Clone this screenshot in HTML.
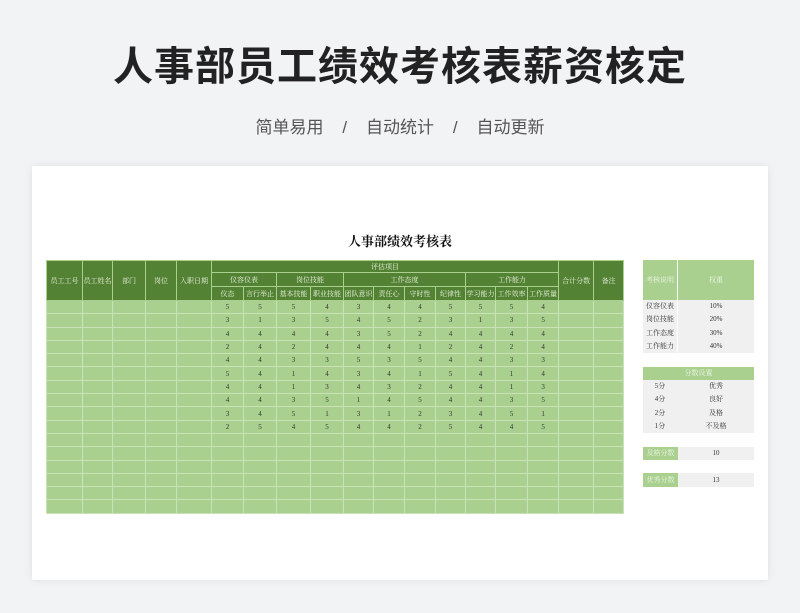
<!DOCTYPE html>
<html><head><meta charset="utf-8"><style>
*{margin:0;padding:0;box-sizing:border-box}
body{width:800px;height:613px;background:#f2f3f5;position:relative;overflow:hidden;font-family:"Liberation Serif","Noto Serif CJK SC",serif}
.h1{position:absolute;top:34px;left:0;width:800px;text-align:center;font:bold 40px "Liberation Sans","Noto Sans CJK SC",sans-serif;color:#222;letter-spacing:1px}
.sub{position:absolute;top:113px;left:0;width:800px;text-align:center;font:17px "Liberation Sans","Noto Sans CJK SC",sans-serif;color:#555;word-spacing:0}
.card{position:absolute;left:32px;top:166px;width:736px;height:414px;background:#fff;box-shadow:0 0 8px rgba(0,0,0,.08)}
.t{position:absolute;left:0;top:231px;width:800px;text-align:center;padding-left:-0px;font:bold 13px "Liberation Serif","Noto Serif CJK SC",serif;color:#111}
table{border-collapse:collapse;table-layout:fixed;position:absolute;font-size:7px;text-align:center}
#m{left:46px;top:260px;width:577px}
#m td{border:1px solid #8fbf6e;padding:0;overflow:hidden;white-space:nowrap}
#m .hd td{background:#548235;color:#e8f2de;border-color:#a9d08e}
#m .b td{background:#a9d08e;border-color:#c9e2b7;color:#333;height:13.3px}
.p{position:absolute;font-size:7px;color:#333}
.p div{position:absolute}
</style></head><body>
<div class="h1">人事部员工绩效考核表薪资核定</div>
<div class="sub">简单易用&nbsp;&nbsp;&nbsp;&nbsp;/&nbsp;&nbsp;&nbsp;&nbsp;自动统计&nbsp;&nbsp;&nbsp;&nbsp;/&nbsp;&nbsp;&nbsp;&nbsp;自动更新</div>
<div class="card"></div>
<div class="t">人事部绩效考核表</div>
<table id="m">
<colgroup><col style="width:36px"><col style="width:30px"><col style="width:33px"><col style="width:31px"><col style="width:35px"><col style="width:32px"><col style="width:33px"><col style="width:34px"><col style="width:33px"><col style="width:30px"><col style="width:31px"><col style="width:31px"><col style="width:30px"><col style="width:30px"><col style="width:32px"><col style="width:31px"><col style="width:35px"><col style="width:30px"></colgroup>
<tr class="hd" style="height:12px"><td rowspan="3">员工工号</td><td rowspan="3">员工姓名</td><td rowspan="3">部门</td><td rowspan="3">岗位</td><td rowspan="3">入职日期</td><td colspan="11">评估项目</td><td rowspan="3">合计分数</td><td rowspan="3">备注</td></tr>
<tr class="hd" style="height:14px"><td colspan="2">仪容仪表</td><td colspan="2">岗位技能</td><td colspan="4">工作态度</td><td colspan="3">工作能力</td></tr>
<tr class="hd" style="height:14px"><td>仪态</td><td>言行举止</td><td>基本技能</td><td>职业技能</td><td>团队意识</td><td>责任心</td><td>守时性</td><td>纪律性</td><td>学习能力</td><td>工作效率</td><td>工作质量</td></tr>
<tr class="b"><td></td><td></td><td></td><td></td><td></td><td>5</td><td>5</td><td>5</td><td>4</td><td>3</td><td>4</td><td>4</td><td>5</td><td>5</td><td>5</td><td>4</td><td></td><td></td></tr>
<tr class="b"><td></td><td></td><td></td><td></td><td></td><td>3</td><td>1</td><td>3</td><td>5</td><td>4</td><td>5</td><td>2</td><td>3</td><td>1</td><td>3</td><td>5</td><td></td><td></td></tr>
<tr class="b"><td></td><td></td><td></td><td></td><td></td><td>4</td><td>4</td><td>4</td><td>4</td><td>3</td><td>5</td><td>2</td><td>4</td><td>4</td><td>4</td><td>4</td><td></td><td></td></tr>
<tr class="b"><td></td><td></td><td></td><td></td><td></td><td>2</td><td>4</td><td>2</td><td>4</td><td>4</td><td>4</td><td>1</td><td>2</td><td>4</td><td>2</td><td>4</td><td></td><td></td></tr>
<tr class="b"><td></td><td></td><td></td><td></td><td></td><td>4</td><td>4</td><td>3</td><td>3</td><td>5</td><td>3</td><td>5</td><td>4</td><td>4</td><td>3</td><td>3</td><td></td><td></td></tr>
<tr class="b"><td></td><td></td><td></td><td></td><td></td><td>5</td><td>4</td><td>1</td><td>4</td><td>3</td><td>4</td><td>1</td><td>5</td><td>4</td><td>1</td><td>4</td><td></td><td></td></tr>
<tr class="b"><td></td><td></td><td></td><td></td><td></td><td>4</td><td>4</td><td>1</td><td>3</td><td>4</td><td>3</td><td>2</td><td>4</td><td>4</td><td>1</td><td>3</td><td></td><td></td></tr>
<tr class="b"><td></td><td></td><td></td><td></td><td></td><td>4</td><td>4</td><td>3</td><td>5</td><td>1</td><td>4</td><td>5</td><td>4</td><td>4</td><td>3</td><td>5</td><td></td><td></td></tr>
<tr class="b"><td></td><td></td><td></td><td></td><td></td><td>3</td><td>4</td><td>5</td><td>1</td><td>3</td><td>1</td><td>2</td><td>3</td><td>4</td><td>5</td><td>1</td><td></td><td></td></tr>
<tr class="b"><td></td><td></td><td></td><td></td><td></td><td>2</td><td>5</td><td>4</td><td>5</td><td>4</td><td>4</td><td>2</td><td>5</td><td>4</td><td>4</td><td>5</td><td></td><td></td></tr>
<tr class="b"><td></td><td></td><td></td><td></td><td></td><td></td><td></td><td></td><td></td><td></td><td></td><td></td><td></td><td></td><td></td><td></td><td></td><td></td></tr>
<tr class="b"><td></td><td></td><td></td><td></td><td></td><td></td><td></td><td></td><td></td><td></td><td></td><td></td><td></td><td></td><td></td><td></td><td></td><td></td></tr>
<tr class="b"><td></td><td></td><td></td><td></td><td></td><td></td><td></td><td></td><td></td><td></td><td></td><td></td><td></td><td></td><td></td><td></td><td></td><td></td></tr>
<tr class="b"><td></td><td></td><td></td><td></td><td></td><td></td><td></td><td></td><td></td><td></td><td></td><td></td><td></td><td></td><td></td><td></td><td></td><td></td></tr>
<tr class="b"><td></td><td></td><td></td><td></td><td></td><td></td><td></td><td></td><td></td><td></td><td></td><td></td><td></td><td></td><td></td><td></td><td></td><td></td></tr>
<tr class="b"><td></td><td></td><td></td><td></td><td></td><td></td><td></td><td></td><td></td><td></td><td></td><td></td><td></td><td></td><td></td><td></td><td></td><td></td></tr>
</table>

<div class="p" style="left:643px;top:260px;width:111px;height:93px;background:#f0f0f0">
 <div style="left:0;top:0;width:111px;height:40px;background:#a9d08e"></div>
 <div style="left:34px;top:0;width:1px;height:93px;background:#fff"></div>
 <div style="left:0;top:0;width:34px;line-height:40px;text-align:center;color:#eef6e8">考核说明</div>
 <div style="left:35px;top:0;width:76px;line-height:40px;text-align:center;color:#eef6e8">权重</div>
 <div style="left:0;top:40px;width:34px;line-height:13.3px;text-align:center">仪容仪表<br>岗位技能<br>工作态度<br>工作能力</div>
 <div style="left:35px;top:40px;width:76px;line-height:13.3px;text-align:center">10%<br>20%<br>30%<br>40%</div>
</div>
<div class="p" style="left:643px;top:367px;width:111px;height:66px;background:#f0f0f0">
 <div style="left:0;top:0;width:111px;height:13px;line-height:13px;background:#a9d08e;color:#eef6e8;text-align:center">分数设置</div>
 <div style="left:0;top:13px;width:34px;line-height:13.3px;text-align:center">5分<br>4分<br>2分<br>1分</div>
 <div style="left:35px;top:13px;width:76px;line-height:13.3px;text-align:center">优秀<br>良好<br>及格<br>不及格</div>
</div>
<div class="p" style="left:643px;top:447px;width:111px;height:13px;background:#f0f0f0">
 <div style="left:0;top:0;width:35px;height:13px;line-height:13px;background:#a9d08e;color:#eef6e8;text-align:center">及格分数</div>
 <div style="left:35px;top:0;width:76px;line-height:13px;text-align:center">10</div>
</div>
<div class="p" style="left:643px;top:473px;width:111px;height:14px;background:#f0f0f0">
 <div style="left:0;top:0;width:35px;height:14px;line-height:14px;background:#a9d08e;color:#eef6e8;text-align:center">优秀分数</div>
 <div style="left:35px;top:0;width:76px;line-height:14px;text-align:center">13</div>
</div>
</body></html>
